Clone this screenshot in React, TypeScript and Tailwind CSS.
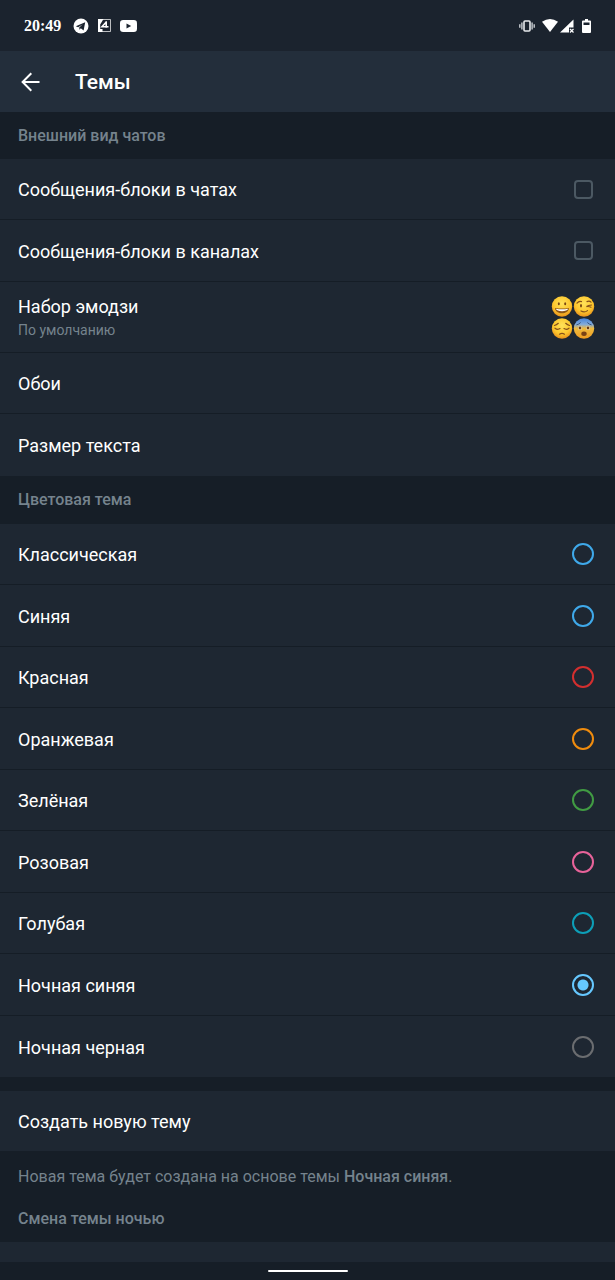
import React, { useState } from "react";
import clsx from "clsx";

const themes = [
  { name: "Классическая", ring: "border-[#3fa9ea] text-[#3fa9ea]" },
  { name: "Синяя", ring: "border-[#3fa9ea] text-[#3fa9ea]" },
  { name: "Красная", ring: "border-[#d32f2f] text-[#d32f2f]" },
  { name: "Оранжевая", ring: "border-[#f08c0e] text-[#f08c0e]" },
  { name: "Зелёная", ring: "border-[#419b43] text-[#419b43]" },
  { name: "Розовая", ring: "border-[#e8639a] text-[#e8639a]" },
  { name: "Голубая", ring: "border-[#0d9fb8] text-[#0d9fb8]" },
  { name: "Ночная синяя", ring: "border-[#66c8ff] text-[#66c8ff]" },
  { name: "Ночная черная", ring: "border-[#6b6d70] text-[#6b6d70]" },
];

const rowClass =
  "flex w-full items-center justify-between border-b border-[#151d26] pl-[18px] pr-[21px] text-left last:border-b-0";

const radioClass =
  "size-[22px] shrink-0 appearance-none rounded-full border-2 checked:bg-[radial-gradient(circle,currentColor_5px,transparent_6px)]";

function StatusBar() {
  return (
    <div className="flex h-[51px] shrink-0 items-center justify-between bg-[#1b232e] px-6 text-white">
      <div className="flex items-center">
        <span className="mr-3 font-['Liberation_Serif'] text-base leading-5 font-bold">
          20:49
        </span>
        <svg className="mr-[9px] size-4" viewBox="0 0 16 16">
          <circle cx="8" cy="8" r="7.5" fill="#fff" />
          <path
            d="M2.800 8.300 12.200 4.200 10.600 12.400 7.800 10.300 6.500 11.700 6.200 9.400 9.800 6.300 5.200 9.200Z"
            fill="#1b232e"
          />
        </svg>
        <svg className="mr-[9px] size-[13px]" viewBox="0 0 13 13">
          <path
            d="M.5.5h12v12H.5z"
            fill="none"
            stroke="#fff"
            strokeOpacity=".7"
          />
          <path d="M0 0h5.500L2.200 5.500V10h2.300V13H0z" fill="#fff" />
          <path
            d="M8.200 2.300v6.500M8.500 2.800 4 7.700h6.500"
            fill="none"
            stroke="#fff"
            strokeWidth="1.600"
          />
        </svg>
        <svg className="h-3 w-[17px]" viewBox="0 0 17 12">
          <rect width="17" height="12" rx="3.2" fill="#fff" />
          <path d="M6.5 3.4v5.2L11.2 6z" fill="#1b232e" />
        </svg>
      </div>
      <div className="flex items-center">
        <svg className="mr-[7px] h-3 w-4" viewBox="0 0 16 12" fill="none">
          <rect
            x="5"
            y="1"
            width="6"
            height="10"
            rx="1"
            stroke="#e8eaed"
            strokeWidth="1.6"
          />
          <path
            d="M2.9 2.5v7M13.1 2.5v7M.8 4.3v3.4M15.2 4.3v3.4"
            stroke="#c9cdd2"
            strokeWidth="1.4"
          />
        </svg>
        <svg className="mr-[2px] h-[13px] w-4" viewBox="0 0 16 13">
          <path d="M0 2.8Q8-2.6 16 2.8L8 13z" fill="#fff" />
        </svg>
        <svg className="mr-2 size-[14px]" viewBox="0 0 14 14">
          <path d="M13.5.5v8H9v5H0z" fill="#fff" />
          <path d="m10 10 3.5 3.5m0-3.5L10 13.5" stroke="#fff" strokeWidth="1.2" />
        </svg>
        <svg className="h-[14px] w-[9px]" viewBox="0 0 9 14">
          <path
            d="M3 0h3v1.5h2a1 1 0 0 1 1 1V13a1 1 0 0 1-1 1H1a1 1 0 0 1-1-1V2.500a1 1 0 0 1 1-1h2z"
            fill="#fff"
          />
          <path d="M1.500 3.500h6V6h-6z" fill="#1b232e" />
        </svg>
      </div>
    </div>
  );
}

function EmojiPreview() {
  return (
    <svg className="-mr-px h-[43px] w-11 shrink-0" viewBox="0 0 44 43">
      <defs>
        <radialGradient id="face" cx=".5" cy=".35" r=".65">
          <stop offset="0" stopColor="#ffe25a" />
          <stop offset=".65" stopColor="#fcc62d" />
          <stop offset="1" stopColor="#e8901b" />
        </radialGradient>
        <linearGradient id="fear" x1="0" y1="0" x2="0" y2="1">
          <stop offset="0" stopColor="#4584dc" />
          <stop offset=".3" stopColor="#83abd8" />
          <stop offset=".5" stopColor="#efbb3e" />
          <stop offset="1" stopColor="#ee9a20" />
        </linearGradient>
      </defs>
      {/* grinning */}
      <circle cx="11" cy="10.500" r="10.200" fill="url(#face)" />
      <ellipse cx="7.800" cy="7.800" rx="1" ry="1.500" fill="#7a4712" />
      <ellipse cx="14.200" cy="7.800" rx="1" ry="1.500" fill="#7a4712" />
      <path d="M4 12q7 1.200 14 0c-.3 7-13.700 7-14 0z" fill="#8b5417" />
      <path d="M4.800 12.800q6.200 1 12.400 0c-.6 3.200-11.800 3.200-12.400 0z" fill="#fff" />
      {/* winking */}
      <circle cx="33" cy="10.500" r="10.200" fill="url(#face)" />
      <ellipse cx="30" cy="9.800" rx="1" ry="1.700" fill="#7a4712" />
      <g fill="none" stroke="#85501a" strokeWidth="1.200" strokeLinecap="round">
        <path d="M26 7.200q2-2.600 4.500-1.600M36 5.600q2.500-1 4 .6M40.500 9q-3 .2-5 1.600 2.500-.4 4.500.6M30 15q3.500 2 6.500-.4" />
      </g>
      {/* pensive */}
      <circle cx="11" cy="32.500" r="10.200" fill="url(#face)" />
      <g fill="none" stroke="#85501a" strokeWidth="1.200" strokeLinecap="round">
        <path d="M3.500 29.500q2-.5 3.800-2.200M18.500 29.500q-2-.5-3.800-2.200M4 32.200q2.500 2 5 .4M13 32.600q2.500 1.600 5-.4M8.500 38.200q2.500-1.600 5 0" />
      </g>
      {/* fearful */}
      <circle cx="33" cy="32.500" r="10.200" fill="url(#fear)" />
      <circle cx="29" cy="32" r="2" fill="#f7e6b8" />
      <circle cx="37" cy="32" r="2" fill="#f7e6b8" />
      <circle cx="29" cy="32" r="1.400" fill="#6b3c10" />
      <circle cx="37" cy="32" r="1.400" fill="#6b3c10" />
      <ellipse cx="33" cy="37.800" rx="2.700" ry="2.200" fill="#7a4214" />
      <path
        d="M25.800 28.800q2.200-.4 3.600-2M40.200 28.800q-2.200-.4-3.600-2"
        fill="none"
        stroke="#39567f"
        strokeLinecap="round"
      />
    </svg>
  );
}

function SectionTitle({
  children,
  className,
}: {
  children: React.ReactNode;
  className?: string;
}) {
  return (
    <h2
      className={clsx(
        "flex shrink-0 items-center pl-[18px] text-base font-medium text-[#75838d]",
        className
      )}
    >
      {children}
    </h2>
  );
}

function CheckRow({ label, className }: { label: string; className: string }) {
  const [checked, setChecked] = useState(false);
  return (
    <label className={clsx(rowClass, className)}>
      <span className="pt-[2px]">{label}</span>
      <input
        type="checkbox"
        checked={checked}
        onChange={(e) => setChecked(e.target.checked)}
        className="mr-px size-[19px] appearance-none rounded-[4px] border-2 border-[#4c5963] checked:bg-[#66c8ff]"
      />
    </label>
  );
}

function App() {
  const [theme, setTheme] = useState("Ночная синяя");
  return (
    <div className="flex h-screen flex-col bg-[#161e27] font-[Roboto,sans-serif] text-lg text-white">
      <StatusBar />
      <header className="flex h-[61px] shrink-0 items-center bg-[#232e3b] pl-[21px]">
        <button aria-label="Назад">
          <svg
            className="size-[20px]"
            viewBox="0 0 20 20"
            fill="none"
            stroke="#fff"
            strokeWidth="2"
          >
            <path d="M18.500 10H2M10.300 1.300 1.600 10l8.700 8.700" />
          </svg>
        </button>
        <h1 className="ml-[34px] text-[21px] leading-6 font-medium">Темы</h1>
      </header>

      <main className="flex min-h-0 flex-1 flex-col overflow-hidden">
        <SectionTitle className="h-[47px]">Внешний вид чатов</SectionTitle>
        <div className="shrink-0 bg-[#1e2732]">
          <CheckRow label="Сообщения-блоки в чатах" className="h-[61px]" />
          <CheckRow label="Сообщения-блоки в каналах" className="h-[62px]" />
          <button className={clsx(rowClass, "h-[71px]")}>
            <span className="pt-[2px]">
              <span className="block leading-6">Набор эмодзи</span>
              <span className="block text-sm leading-[22px] text-[#75838d]">
                По умолчанию
              </span>
            </span>
            <EmojiPreview />
          </button>
          <button className={clsx(rowClass, "h-[61px] pt-[2px]")}>Обои</button>
          <button className={clsx(rowClass, "h-[62px] pt-[2px]")}>
            Размер текста
          </button>
        </div>

        <SectionTitle className="h-12">Цветовая тема</SectionTitle>
        <div className="shrink-0 bg-[#1e2732]">
          {themes.map((item) => (
            <label
              key={item.name}
              className={clsx(rowClass, "h-[61px] even:h-[62px]")}
            >
              <span className="pt-[2px]">{item.name}</span>
              <input
                type="radio"
                name="theme"
                checked={theme === item.name}
                onChange={() => setTheme(item.name)}
                className={clsx(radioClass, item.ring)}
              />
            </label>
          ))}
        </div>

        <div className="mt-[14px] shrink-0 bg-[#1e2732]">
          <button className={clsx(rowClass, "h-[60px] pt-[2px]")}>
            Создать новую тему
          </button>
        </div>
        <p className="shrink-0 pt-[14px] pl-[18px] text-base text-[#75838d]">
          Новая тема будет создана на основе темы{" "}
          <b className="font-medium">Ночная синяя</b>.
        </p>
        <SectionTitle className="h-[53px] pt-[6px]">
          Смена темы ночью
        </SectionTitle>
        <div className="flex h-[61px] shrink-0 items-center justify-end bg-[#1e2732] pr-[21px]">
          <input
            type="radio"
            name="night"
            defaultChecked
            aria-label="Отключена"
            className={clsx(radioClass, "border-[#66c8ff] text-[#66c8ff]")}
          />
        </div>
      </main>

      <footer className="flex h-[18px] shrink-0 items-center justify-center">
        <div className="h-[2px] w-20 rounded-full bg-white" />
      </footer>
    </div>
  );
}

export default App;
